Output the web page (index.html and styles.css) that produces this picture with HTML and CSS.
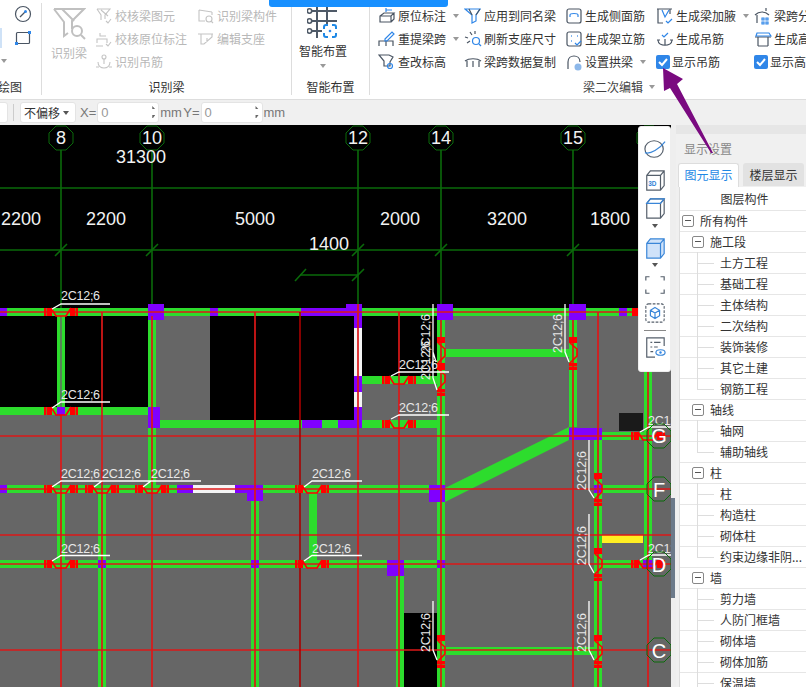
FILE: index.html
```html
<!DOCTYPE html>
<html lang="zh">
<head>
<meta charset="utf-8">
<title>梁二次编辑</title>
<link rel="stylesheet" href="styles.css">
</head>
<body>
<svg class="defs" width="0" height="0">
  <symbol id="mh" viewBox="-20 -6 40 12" overflow="visible">
    <rect class="rd" x="-17" y="-4" width="2.500" height="8"/><rect class="rd" x="-14" y="-4" width="5" height="8"/>
    <rect class="rd" x="9" y="-4" width="5" height="8"/><rect class="rd" x="14.500" y="-4" width="2.500" height="8"/>
    <polyline class="zig" points="-10,-4 -5,4 5,4 10,-4"/>
  </symbol>
  <symbol id="mv" viewBox="-6 -20 12 40" overflow="visible">
    <rect class="rd" x="-4" y="-16" width="8" height="6"/>
    <rect class="rd" x="-4" y="10" width="8" height="3"/><rect class="rd" x="-4" y="13.500" width="8" height="3.500"/>
    <polyline class="zig" points="-3,-10 4,-4 4,3 -3,10"/>
  </symbol>
  <symbol id="ax" viewBox="-13 -13 26 26" overflow="visible">
    <polygon class="axc" points="5,-12 -5,-12 -12,-5 -12,5 -5,12 5,12 12,5 12,-5"/>
  </symbol>
</svg>

<header class="ribbon">
  <section class="group g-draw">
    <div class="body draw-body">
      <div class="sliver-col"><span class="sliver"></span><span class="caret sliver-caret"></span></div>
      <div class="draw-icons">
        <svg class="ic" viewBox="0 0 18 18"><circle class="s-d" cx="9" cy="9" r="7.5"/><path class="s-d" d="M6 12l5-5"/><circle class="f-b" cx="11.500" cy="6.500" r="1.500"/></svg>
        <svg class="ic" viewBox="0 0 18 18"><rect class="s-d" x="2.500" y="3.500" width="13" height="11" rx="1"/><rect class="f-b" x="1" y="13" width="3" height="3"/><rect class="f-b" x="14" y="2" width="3" height="3"/></svg>
      </div>
    </div>
    <div class="glabel draw-label">绘图</div>
  </section>
  <span class="sep"></span>
  <section class="group g-id">
    <div class="body id-body">
      <div class="big muted">
        <svg class="big-ic" viewBox="0 0 34 34"><path class="s-g2" d="M2 2h30L20 14v8M2 2l10 13v14l4-3"/><path class="s-g2" d="M10 2l12 12"/><circle class="s-g2" cx="25" cy="24" r="5"/><path class="s-g2" d="M29 28l4 4"/></svg>
        <span>识别梁</span>
      </div>
      <div class="col muted">
        <div class="item"><svg class="ic" viewBox="0 0 18 18"><path class="s-g" d="M2 2h13l-5 6v4M2 2l4 6v5M6 3l7 6"/><path class="s-g" d="M11 14l2 2 3-4"/></svg><span>校核梁图元</span></div>
        <div class="item"><svg class="ic" viewBox="0 0 18 18"><path class="s-g" d="M5 3v3h6M2 13v-4h10v4M1 16h7"/><path class="s-g" d="M11 14l2 2 3-4"/></svg><span>校核原位标注</span></div>
        <div class="item"><svg class="ic" viewBox="0 0 18 18"><circle class="s-g" cx="9" cy="4" r="2"/><path class="s-g" d="M9 6v5M3 9c0 8 12 8 12 0M1 14h3M14 14h3"/></svg><span>识别吊筋</span></div>
      </div>
      <div class="col muted">
        <div class="item"><svg class="ic" viewBox="0 0 18 18"><path class="s-g" d="M2 3l13 2M2 3v11h6M15 5v3"/><circle class="s-g" cx="12" cy="12" r="3"/><path class="s-g" d="M14 14l2 2"/></svg><span>识别梁构件</span></div>
        <div class="item"><svg class="ic" viewBox="0 0 18 18"><path class="s-g" d="M1 4h15M4 4v10h3l8-7V4M10 8v4"/></svg><span>编辑支座</span></div>
      </div>
    </div>
    <div class="glabel">识别梁</div>
  </section>
  <span class="sep"></span>
  <section class="group g-smart">
    <div class="body smart-body">
      <svg class="smart-ic" viewBox="0 0 32 39"><path class="s-sm" d="M10 0v38M20 0v24M2 11h28M2 21h28M2 31h13"/><circle class="f-w" cx="2.500" cy="11" r="2.200"/><circle class="f-w" cx="2.500" cy="21" r="2.200"/><circle class="f-w" cx="2.500" cy="31" r="2.200"/><path class="s-bl" d="M17 29v-2a2 2 0 0 1 2-2h2M25 25h2a2 2 0 0 1 2 2v2M29 33v2a2 2 0 0 1-2 2h-2M21 37h-2a2 2 0 0 1-2-2v-2"/><circle class="f-b" cx="23" cy="31" r="1.300"/></svg>
      <span>智能布置</span>
      <span class="caret"></span>
    </div>
    <div class="glabel">智能布置</div>
  </section>
  <span class="sep"></span>
  <section class="group g-edit">
    <div class="body edit-body">
      <div class="item"><svg class="ic" viewBox="0 0 18 18"><path class="s-d" d="M2 9h11l3-3H6L2 9v6h11V9M16 6v6l-3 3"/><path class="s-b" d="M8 5V1M8 3h6"/></svg><span>原位标注</span><span class="caret"></span></div>
      <div class="item"><svg class="ic" viewBox="0 0 18 18"><path class="s-b" d="M1 2h15l-4 6v6l-4 2V8z"/><path class="s-d" d="M5 2l3 6M12 8l4-6"/></svg><span>应用到同名梁</span></div>
      <div class="item"><svg class="ic" viewBox="0 0 18 18"><rect class="s-d" x="2" y="2" width="14" height="14" rx="2"/><path class="s-b" d="M5 8c0-2 8-2 8 0v2M5 8v2"/></svg><span>生成侧面筋</span></div>
      <div class="item"><svg class="ic" viewBox="0 0 18 18"><path class="s-d" d="M1 2h15M2 2v14h5M14 2v5"/><path class="s-b" d="M6 3l3 7 4-7M10 14l2 2 4-4"/></svg><span>生成梁加腋</span><span class="caret"></span></div>
      <div class="item"><svg class="ic" viewBox="0 0 18 18"><path class="s-d" d="M1 8c4-4 10-4 14 0M3 8v8M12 4V1"/><path class="s-b" d="M8 11h2v2H8zM12 11h2v2h-2zM8 15h2v2H8zM12 15h2v2h-2z"/></svg><span>梁跨分层</span></div>

      <div class="item"><svg class="ic" viewBox="0 0 18 18"><path class="s-d" d="M1 16v-5h14v5M8 11v5"/><path class="s-b" d="M7 9l7-7 2 2-7 7H7z"/></svg><span>重提梁跨</span><span class="caret"></span></div>
      <div class="item"><svg class="ic" viewBox="0 0 18 18"><path class="s-d" d="M1 7l3 1M6 2l2 3M11 1v3M3 13l3-2"/><circle class="s-b" cx="12" cy="11" r="3.500"/><path class="s-b" d="M15 14l2 2"/></svg><span>刷新支座尺寸</span></div>
      <div class="item"><svg class="ic" viewBox="0 0 18 18"><rect class="s-d" x="2" y="2" width="14" height="14" rx="2"/><path class="s-bd2" d="M6 6h.8M12 6h.8M6 11h.8"/><path class="s-b" d="M10 13l2 2 4-4"/></svg><span>生成架立筋</span></div>
      <div class="item"><svg class="ic" viewBox="0 0 18 18"><path class="s-d" d="M2 10c0 7 14 7 14 0M1 10h3M14 10h3M9 9v6"/><path class="s-b" d="M6 5l2 2 4-4"/></svg><span>生成吊筋</span></div>
      <div class="item"><svg class="ic" viewBox="0 0 18 18"><path class="s-d" d="M1 7h16M4 7v9M14 7v9M4 16h10"/><path class="s-b" d="M3 3h12l2 3H2z"/></svg><span>生成高强节点</span></div>

      <div class="item"><svg class="ic" viewBox="0 0 18 18"><path class="s-d" d="M1 2h10l4 2-3 5v4H6V8z"/><circle class="s-b" cx="12" cy="13" r="2.500"/></svg><span>查改标高</span></div>
      <div class="item"><svg class="ic" viewBox="0 0 18 18"><path class="s-d" d="M1 8c4-3 12-3 16 0M3 8v6M15 8v6M9 8v6"/></svg><span>梁跨数据复制</span></div>
      <div class="item"><svg class="ic" viewBox="0 0 18 18"><path class="s-d" d="M3 16V9c0-8 12-8 12 0"/><circle class="f-b3" cx="13" cy="14" r="3.500"/></svg><span>设置拱梁</span><span class="caret"></span></div>
      <label class="item check-item"><span class="check"><svg viewBox="0 0 14 14"><path class="s-w" d="M3 7l3 3 5-6"/></svg></span><span>显示吊筋</span></label>
      <label class="item check-item"><span class="check"><svg viewBox="0 0 14 14"><path class="s-w" d="M3 7l3 3 5-6"/></svg></span><span>显示高强节点</span></label>
    </div>
    <div class="glabel edit-label"><span>梁二次编辑</span><span class="caret"></span></div>
  </section>
</header>

<div class="optbar">
  <span class="field f-stub"></span>
  <span class="optsep"></span>
  <span class="field f-select">不偏移<span class="caret dark"></span></span>
  <span class="xy">X=</span>
  <span class="field f-num">0<span class="spin"></span></span>
  <span class="unit">mm</span>
  <span class="xy">Y=</span>
  <span class="field f-num">0<span class="spin"></span></span>
  <span class="unit">mm</span>
</div>

<main class="main">
  <div class="canvas">
    <svg class="cad" viewBox="0 125 671 562" width="671" height="562">
      <rect class="gray" x="0" y="308" width="671" height="379"/>
      <rect class="blk" x="0" y="316" width="57" height="91"/>
      <rect class="blk" x="65" y="316" width="83" height="91"/>
      <rect class="blk" x="210" y="316" width="144" height="104"/>
      <rect class="blk" x="362" y="316" width="75" height="60"/>
      <rect class="blk" x="404" y="613" width="33" height="74"/>
      <rect class="dark" x="619" y="413" width="24" height="18"/>
      <rect class="yel" x="602" y="535" width="41" height="8"/>

      <g class="axl">
        <path d="M0 188H640M0 250H640M300 275H358M61 150V308M152 150V304M358 150V304M441 150V304M573 150V304"/>
        <path d="M55 256L67 244M146 256L158 244M352 256L364 244M435 256L447 244M567 256L579 244M295 281L306 269M352 281L364 269"/>
      </g>

      <g class="grn">
        <rect x="0" y="308" width="640" height="8"/>
        <rect x="0" y="407" width="148" height="8"/>
        <rect x="160" y="420" width="194" height="8"/>
        <rect x="362" y="376" width="75" height="8"/>
        <rect x="362" y="420" width="75" height="8"/>
        <rect x="445" y="349" width="124" height="8"/>
        <rect x="0" y="485" width="177" height="8"/>
        <rect x="263" y="485" width="166" height="8"/>
        <rect x="602" y="485" width="44" height="8"/>
        <rect x="0" y="560" width="387" height="8"/>
        <rect x="404" y="560" width="33" height="8"/>
        <rect x="602" y="560" width="44" height="8"/>
        <rect x="445" y="647" width="149" height="8"/>
        <rect x="602" y="432" width="44" height="8"/>
        <polygon points="445,488 569,427 569,440 445,502"/>
        <rect x="57" y="316" width="8" height="91"/>
        <rect x="148" y="316" width="8" height="91"/>
        <rect x="148" y="428" width="8" height="57"/>
        <rect x="57" y="493" width="8" height="67"/>
        <rect x="98" y="493" width="8" height="194"/>
        <rect x="251" y="493" width="8" height="194"/>
        <rect x="309" y="493" width="8" height="67"/>
        <rect x="396" y="576" width="8" height="111"/>
        <rect x="437" y="316" width="8" height="371"/>
        <rect x="569" y="316" width="8" height="111"/>
        <rect x="594" y="440" width="8" height="247"/>
        <rect x="644" y="372" width="8" height="196"/>
      </g>
      <path class="core" d="M61 316V407"/>

      <g class="wht">
        <rect x="354" y="328" width="8" height="48"/>
        <rect x="354" y="392" width="8" height="15"/>
        <rect x="193" y="485" width="42" height="8"/>
      </g>

      <g class="pur">
        <rect x="0" y="308" width="7" height="8"/>
        <rect x="148" y="304" width="16" height="16"/>
        <rect x="210" y="308" width="8" height="8"/>
        <path d="M301 308H346V304H362V328H354V316H301Z"/>
        <rect x="354" y="376" width="8" height="16"/>
        <path d="M354 407H362V428H338V420H354Z"/>
        <rect x="302" y="420" width="20" height="8"/>
        <rect x="437" y="304" width="16" height="16"/>
        <rect x="569" y="304" width="17" height="16"/>
        <rect x="619" y="308" width="8" height="8"/>
        <rect x="569" y="428" width="33" height="12"/>
        <rect x="148" y="407" width="12" height="21"/>
        <rect x="0" y="485" width="7" height="8"/>
        <rect x="177" y="485" width="16" height="8"/>
        <path d="M235 485H263V501H247V493H235Z"/>
        <rect x="98" y="560" width="8" height="8"/>
        <rect x="251" y="560" width="8" height="8"/>
        <rect x="429" y="485" width="16" height="17"/>
        <rect x="387" y="560" width="17" height="16"/>
        <rect x="437" y="560" width="8" height="8"/>
        <rect x="594" y="485" width="8" height="8"/>
        <rect x="643" y="560" width="9" height="8"/>
        <rect x="57" y="407" width="8" height="8"/>
      </g>

      <g class="redl">
        <path d="M0 312H640M0 436H671M0 489H671M0 535H671M0 564H671M0 650H671"/>
        <path d="M61 415V687M102 312V687M152 316V687M255 312V687M358 304V687M399 312V687M441 320V687M573 320V687M598 312V687M648 372V687"/>
      </g>
      <path class="redd" d="M300 312V687"/>

      <use href="#mh" x="41" y="306" width="40" height="12"/>
      <use href="#mh" x="41" y="405" width="40" height="12"/>
      <use href="#mh" x="41" y="483" width="40" height="12"/>
      <use href="#mh" x="82" y="483" width="40" height="12"/>
      <use href="#mh" x="132" y="483" width="40" height="12"/>
      <use href="#mh" x="292" y="483" width="40" height="12"/>
      <use href="#mh" x="41" y="558" width="40" height="12"/>
      <use href="#mh" x="292" y="558" width="40" height="12"/>
      <use href="#mh" x="379" y="374" width="40" height="12"/>
      <use href="#mh" x="379" y="418" width="40" height="12"/>
      <use href="#mh" x="628" y="430" width="40" height="12"/>
      <use href="#mh" x="628" y="558" width="40" height="12"/>
      <use href="#mv" x="435" y="333" width="12" height="40"/>
      <use href="#mv" x="435" y="359" width="12" height="40"/>
      <use href="#mv" x="435" y="631" width="12" height="40"/>
      <use href="#mv" x="567" y="333" width="12" height="40"/>
      <use href="#mv" x="592" y="469" width="12" height="40"/>
      <use href="#mv" x="592" y="544" width="12" height="40"/>
      <use href="#mv" x="592" y="631" width="12" height="40"/>
      <rect class="rd" x="632" y="308" width="8" height="8"/>

      <g class="lead">
        <path d="M52 309L61 304H110M52 408L61 402H110M52 487L61 481H110M94 487L102 481H151M143 487L151 481H201M304 487L312 481H362M52 561L61 555.500H110M304 561L312 555.500H362M391 376L399 372H449M391 419L399 415H449"/>
        <path d="M433 304V352L436 362M433 340V378L437 390M565 304V352L569 362M589 440V490L594 498M589 514V564L594 573M589 601V650L594 660M433 601V650L437 660"/>
        <path d="M640 432L649 427H671M640 560L649 555H671"/>
      </g>
      <g class="lbl">
        <text x="61" y="300">2C12;6</text>
        <text x="61" y="399">2C12;6</text>
        <text x="61" y="478">2C12;6</text>
        <text x="102" y="478">2C12;6</text>
        <text x="151" y="478">2C12;6</text>
        <text x="312" y="478">2C12;6</text>
        <text x="61" y="553">2C12;6</text>
        <text x="312" y="553">2C12;6</text>
        <text x="399" y="369">2C12;6</text>
        <text x="399" y="412">2C12;6</text>
        <text x="648" y="425">2C12;6</text>
        <text x="648" y="553">2C12;6</text>
        <text transform="rotate(-90 430 353)" x="430" y="353">2C12;6</text>
        <text transform="rotate(-90 430 380)" x="430" y="380">2C12;6</text>
        <text transform="rotate(-90 430 652)" x="430" y="652">2C12;6</text>
        <text transform="rotate(-90 562 353)" x="562" y="353">2C12;6</text>
        <text transform="rotate(-90 586 490)" x="586" y="490">2C12;6</text>
        <text transform="rotate(-90 586 565)" x="586" y="565">2C12;6</text>
        <text transform="rotate(-90 586 652)" x="586" y="652">2C12;6</text>
      </g>

      <use href="#ax" x="48" y="125" width="26" height="26"/>
      <use href="#ax" x="139" y="125" width="26" height="26"/>
      <use href="#ax" x="345" y="125" width="26" height="26"/>
      <use href="#ax" x="428" y="125" width="26" height="26"/>
      <use href="#ax" x="560" y="125" width="26" height="26"/>
      <use href="#ax" x="636" y="125" width="26" height="26"/>
      <use href="#ax" x="646" y="423" width="26" height="26"/>
      <use href="#ax" x="646" y="476" width="26" height="26"/>
      <use href="#ax" x="646" y="551" width="26" height="26"/>
      <use href="#ax" x="646" y="637" width="26" height="26"/>
      <g class="dim mid">
        <text x="61" y="144">8</text><text x="152" y="144">10</text><text x="358" y="144">12</text><text x="441" y="144">14</text><text x="573" y="144">15</text>
        <text x="141" y="163">31300</text>
        <text x="21" y="225">2200</text><text x="106" y="225">2200</text><text x="255" y="225">5000</text>
        <text x="400" y="225">2000</text><text x="507" y="225">3200</text><text x="610" y="225">1800</text>
        <text x="329" y="250">1400</text>
      </g>
      <g class="axis-letter mid">
        <text x="659" y="443">G</text><text x="659" y="497">F</text><text x="659" y="572">D</text><text x="659" y="658">C</text>
      </g>
    </svg>

    <nav class="viewtools">
      <svg class="vt vt-a" viewBox="0 0 24 24"><ellipse class="s-v" cx="11" cy="12" rx="10" ry="9"/><path class="s-v2" d="M1 16c6 2 16-4 22-12"/></svg>
      <svg class="vt vt-b" viewBox="0 0 24 24"><path class="s-v" d="M3 7l4-5h15v16l-4 5H3zM3 7h15v16M18 7l4-5"/><text class="t3d" x="4.500" y="19">3D</text></svg>
      <svg class="vt vt-c" viewBox="0 0 24 24"><path class="s-v" d="M3 7l4-5h15v16l-4 5H3zM18 7v16M18 7l4-5"/><path class="s-v2" d="M3 7l4-5h15l-4 5z"/></svg>
      <span class="caret dark vc vc-a"></span>
      <svg class="vt vt-d" viewBox="0 0 24 24"><path class="f-cube" d="M3 7l4-5h15v16l-4 5H3z"/><path class="s-v2" d="M3 7l4-5h15v16l-4 5H3zM3 7h15v16M18 7l4-5"/></svg>
      <span class="caret dark vc vc-b"></span>
      <svg class="vt vt-b" viewBox="0 0 24 24"><path class="s-v" d="M6 3H2v4M18 3h4v4M6 21H2v-4M18 21h4v-4"/></svg>
      <svg class="vt vt-e" viewBox="0 0 24 24"><rect class="s-vd" x="2" y="2" width="20" height="20" rx="3"/><path class="s-v2" d="M12 6l5 3v6l-5 3-5-3V9zM7 9l5 3 5-3M12 12v6"/></svg>
      <span class="vsep"></span>
      <svg class="vt" viewBox="0 0 24 24"><path class="s-v" d="M22 11V2H3v21h9M7 7h2M11 7h7M7 12h2M11 12h4M7 17h3"/><ellipse class="s-v2" cx="18" cy="18" rx="5" ry="3"/><circle class="f-b" cx="18" cy="18" r="1.300"/></svg>
    </nav>
  </div>

  <div class="scrollstrip"><span class="thumb"></span></div>

  <aside class="panel">
    <div class="ptitle">显示设置</div>
    <div class="tabs"><span class="tab on">图元显示</span><span class="tab">楼层显示</span></div>
    <div class="tree">
      <div class="thead">图层构件</div>
      <div class="row l0"><span class="box"></span>所有构件</div>
      <div class="row l1"><span class="box"></span>施工段</div>
      <div class="row leaf">土方工程</div>
      <div class="row leaf">基础工程</div>
      <div class="row leaf">主体结构</div>
      <div class="row leaf">二次结构</div>
      <div class="row leaf">装饰装修</div>
      <div class="row leaf">其它土建</div>
      <div class="row leaf last">钢筋工程</div>
      <div class="row l1"><span class="box"></span>轴线</div>
      <div class="row leaf">轴网</div>
      <div class="row leaf last">辅助轴线</div>
      <div class="row l1"><span class="box"></span>柱</div>
      <div class="row leaf">柱</div>
      <div class="row leaf">构造柱</div>
      <div class="row leaf">砌体柱</div>
      <div class="row leaf last">约束边缘非阴...</div>
      <div class="row l1"><span class="box"></span>墙</div>
      <div class="row leaf">剪力墙</div>
      <div class="row leaf">人防门框墙</div>
      <div class="row leaf">砌体墙</div>
      <div class="row leaf">砌体加筋</div>
      <div class="row leaf">保温墙</div>
    </div>
  </aside>
</main>

<div class="topbar"></div>
<svg class="arrow" viewBox="0 0 806 687" width="806" height="687"><polygon class="f-arrow" points="663,68 683,79 677,84 713,153 711,153 670,88 664,91"/></svg>
</body>
</html>
```

FILE: styles.css
```css
* { box-sizing: border-box; }
html, body { margin: 0; height: 100%; }
body {
  position: relative;
  width: 806px;
  height: 687px;
  overflow: hidden;
  background: #f0f0f0;
  color: #333;
  font: 12px/16px "Noto Sans CJK SC", "Liberation Sans", sans-serif;
}
.defs { position: absolute; }

/* ribbon */
.ribbon { display: flex; height: 99px; background: #fff; overflow: hidden; }
.group { display: flex; flex-direction: column; flex: none; }
.body { flex: 1; min-height: 0; }
.glabel { height: 24px; line-height: 24px; text-align: center; flex: none; }
.sep { flex: none; width: 1px; margin: 3px 0 4px; background: #ddd; }
.caret { display: inline-block; width: 0; height: 0; border: 3.500px solid transparent; border-top: 4px solid #999; border-bottom: 0; }
.caret.dark { border-top-color: #555; }

.g-draw { width: 41px; }
.draw-body { display: flex; }
.sliver-col { width: 14px; position: relative; display: flex; flex-direction: column; }
.sliver { width: 2px; height: 20px; margin-top: 28px; background: #cfe2f7; }
.sliver-caret { margin: 11px 0 0 1px; }
.draw-icons { display: flex; flex-direction: column; gap: 6px; padding-top: 5px; }
.draw-label { text-align: left; margin-left: -2px; }

.g-id { width: 249px; }
.id-body { display: grid; grid-template-columns: 53px 102px 1fr; padding-top: 4px; }
.muted { color: #b8b8b8; }
.big { display: flex; flex-direction: column; align-items: center; padding: 3px 0 0 8px; width: 46px; }
.big-ic { width: 34px; height: 34px; flex: none; margin-bottom: 4px; }
.big span { white-space: nowrap; }
.col { display: flex; flex-direction: column; }
.item { display: flex; align-items: center; height: 23px; white-space: nowrap; gap: 2px; }
.item .caret { margin-left: 5px; }
.ic { width: 18px; height: 18px; flex: none; }

.g-smart { width: 77px; }
.smart-body { display: flex; flex-direction: column; align-items: center; padding-right: 15px; }
.smart-ic { width: 32px; height: 39px; flex: none; margin-bottom: 4px; }
.smart-body .caret { margin-top: 5px; }

.g-edit { width: 484px; }
.edit-body { display: grid; grid-template-columns: 86px 101px 91px 98px 1fr; grid-auto-rows: 23px; padding: 4px 0 0 8px; }
.check-item { gap: 2px; }
.check { display: flex; width: 14px; height: 14px; border-radius: 2px; background: #2f86e8; }
.check svg { width: 14px; height: 14px; }
.edit-label { display: flex; justify-content: center; align-items: center; gap: 6px; color: #444; padding-left: 14px; height: 23px; line-height: 23px; margin-bottom: 1px; }

/* option bar */
.optbar { display: flex; align-items: center; height: 26px; border-top: 1px solid #ddd; background: #f0f0f0; color: #666; }
.field { display: flex; align-items: center; height: 21px; background: #fff; border: 1px solid #e4e4e4; border-radius: 3px; position: relative; }
.f-stub { width: 9px; margin-left: -1px; border-radius: 0 3px 3px 0; }
.optsep { width: 1px; height: 17px; background: #ccc; margin: 0 6px 0 5px; }
.f-select { width: 56px; padding-left: 3px; color: #333; justify-content: space-between; padding-right: 6px; }
.xy { margin: 0 1px 0 4px; color: #777; font-family: "Liberation Sans", sans-serif; font-size: 13px; }
.unit + .xy { margin-left: 2px; }
.f-num { width: 62px; padding-left: 3px; color: #999; font-family: "Liberation Sans", sans-serif; font-size: 13px; }
.spin { position: absolute; right: 3px; top: 3px; width: 6px; height: 13px; background: linear-gradient(#666 0 3px, transparent 3px 9px, #666 9px 12px, transparent 12px); clip-path: polygon(50% 0, 100% 25%, 0 25%, 0 70%, 100% 70%, 50% 100%); }
.unit { margin-left: 1px; color: #777; font-family: "Liberation Sans", sans-serif; font-size: 13px; width: 21px; }

/* main */
.main { display: flex; height: 562px; }
.canvas { position: relative; width: 671px; flex: none; background: #000; overflow: hidden; }
.cad { display: block; }
.gray { fill: #666; }
.blk { fill: #000; }
.dark { fill: #1a1a1a; }
.yel { fill: #ffee22; }
.grn { fill: #2ddc2d; }
.wht { fill: #f4f4f4; }
.pur { fill: #8000ff; }
.core { fill: none; stroke: #666; stroke-width: 1.500; }
.axl { fill: none; stroke: #0a6a0a; stroke-width: 1.600; }
.redl { fill: none; stroke: #dc1818; stroke-width: 1.700; }
.redd { fill: none; stroke: #a80000; stroke-width: 1.600; }
.rd { fill: #ff0000; }
.zig { fill: none; stroke: #ff0000; stroke-width: 1.600; }
.axc { fill: none; stroke: #0a6a0a; stroke-width: 1; }
.lead { fill: none; stroke: #fff; stroke-width: 1.300; }
.lbl { fill: #e8e8e8; font: 12.500px "Liberation Sans", sans-serif; letter-spacing: -.25px; }
.dim { fill: #f2f2f2; font: 18px "Liberation Sans", sans-serif; }
.axis-letter { fill: #fff; font: 20px "Liberation Sans", sans-serif; }
.mid { text-anchor: middle; }

.viewtools { position: absolute; left: 638px; top: 1px; width: 33px; height: 246px; display: flex; flex-direction: column; align-items: center; padding-top: 11px; background: #fff; border-radius: 3px; border: 1px solid #eee; }
.vt { width: 22px; height: 22px; flex: none; margin-bottom: 7px; }
.vt-a { margin-bottom: 9px; }
.vt-b { margin-bottom: 6px; }
.vt-c { margin-bottom: 5px; }
.vt-d { margin-bottom: 4px; }
.vt-e { margin-bottom: 6px; }
.vc { flex: none; }
.vc-a { margin-bottom: 9px; }
.vc-b { margin-bottom: 7px; }
.vsep { width: 22px; height: 1px; background: #888; margin: 0 0 5px; flex: none; }
.s-v { fill: none; stroke: #555f6b; stroke-width: 1.300; }
.s-v2 { fill: none; stroke: #3a86d8; stroke-width: 1.300; }
.s-vd { fill: none; stroke: #555f6b; stroke-width: 1.200; stroke-dasharray: 3 1.500; }
.f-cube { fill: #cfe2f9; }
.t3d { font: bold 7px "Liberation Sans", sans-serif; fill: #2f7fd6; }

.scrollstrip { width: 5px; flex: none; background: #eee; position: relative; }
.thumb { position: absolute; left: 0; top: 373px; width: 4px; height: 100px; background: #6c7a8a; }

/* panel */
.panel { width: 130px; flex: none; background: #f0f0f0; }
.ptitle { height: 38px; padding: 8px 0 0 8px; color: #888; border-top: 9px solid #e6e6e6; line-height: 14px; }
.tabs { display: flex; gap: 4px; padding-left: 2px; height: 24px; }
.tab { width: 61px; height: 23px; text-align: center; line-height: 24px; background: #e2e2e2; border-radius: 3px 3px 0 0; }
.tab.on { background: #fff; color: #1e88e5; border: 1px solid #ddd; border-bottom: 0; line-height: 22px; height: 24px; }
.tree { margin-left: 3px; background: #fff; border-left: 1px solid #ddd; height: 500px; overflow: hidden; }
.thead { height: 24px; line-height: 24px; text-align: center; padding-left: 3px; border-bottom: 1px solid #e6e6e6; }
.row { position: relative; height: 21px; line-height: 20px; display: flex; align-items: center; border-bottom: 1px solid #e6e6e6; white-space: nowrap; }
.l0 { padding-left: 2px; gap: 6px; }
.l1 { padding-left: 12px; gap: 6px; }
.box { position: relative; flex: none; width: 12px; height: 12px; border: 1px solid #888; border-radius: 2px; background: #fff; }
.box::after { content: ""; position: absolute; left: 2px; top: 4px; width: 6px; height: 1px; background: #555; }
.leaf { padding-left: 40px; }
.leaf::before { content: ""; position: absolute; left: 17px; top: -1px; width: 1px; height: 21px; background: #ddd; }
.leaf.last::before { height: 11px; }
.leaf::after { content: ""; position: absolute; left: 17px; top: 10px; width: 17px; height: 1px; background: #ddd; }

/* overlays */
.topbar { position: absolute; left: 269px; top: 0; width: 179px; height: 7px; background: #1890ff; border-radius: 0 0 3px 3px; }
.arrow { position: absolute; left: 0; top: 0; pointer-events: none; }
.f-arrow { fill: #7a0a80; }

/* icon strokes */
.s-d { fill: none; stroke: #4a5563; stroke-width: 1.200; }
.s-b { fill: none; stroke: #2f86e8; stroke-width: 1.200; }
.s-bl { fill: none; stroke: #1e88e5; stroke-width: 2; }
.s-bd2 { fill: none; stroke: #2f86e8; stroke-width: 1.600; }
.s-g { fill: none; stroke: #c4c4c4; stroke-width: 1.100; }
.s-g2 { fill: none; stroke: #c0c0c0; stroke-width: 2; }
.s-sm { fill: none; stroke: #4f5a68; stroke-width: 2; }
.s-w { fill: none; stroke: #fff; stroke-width: 2; }
.f-b { fill: #2f86e8; }
.f-b3 { fill: #8db8ea; }
.f-w { fill: #fff; stroke: #4f5a68; stroke-width: 1.600; }
```
